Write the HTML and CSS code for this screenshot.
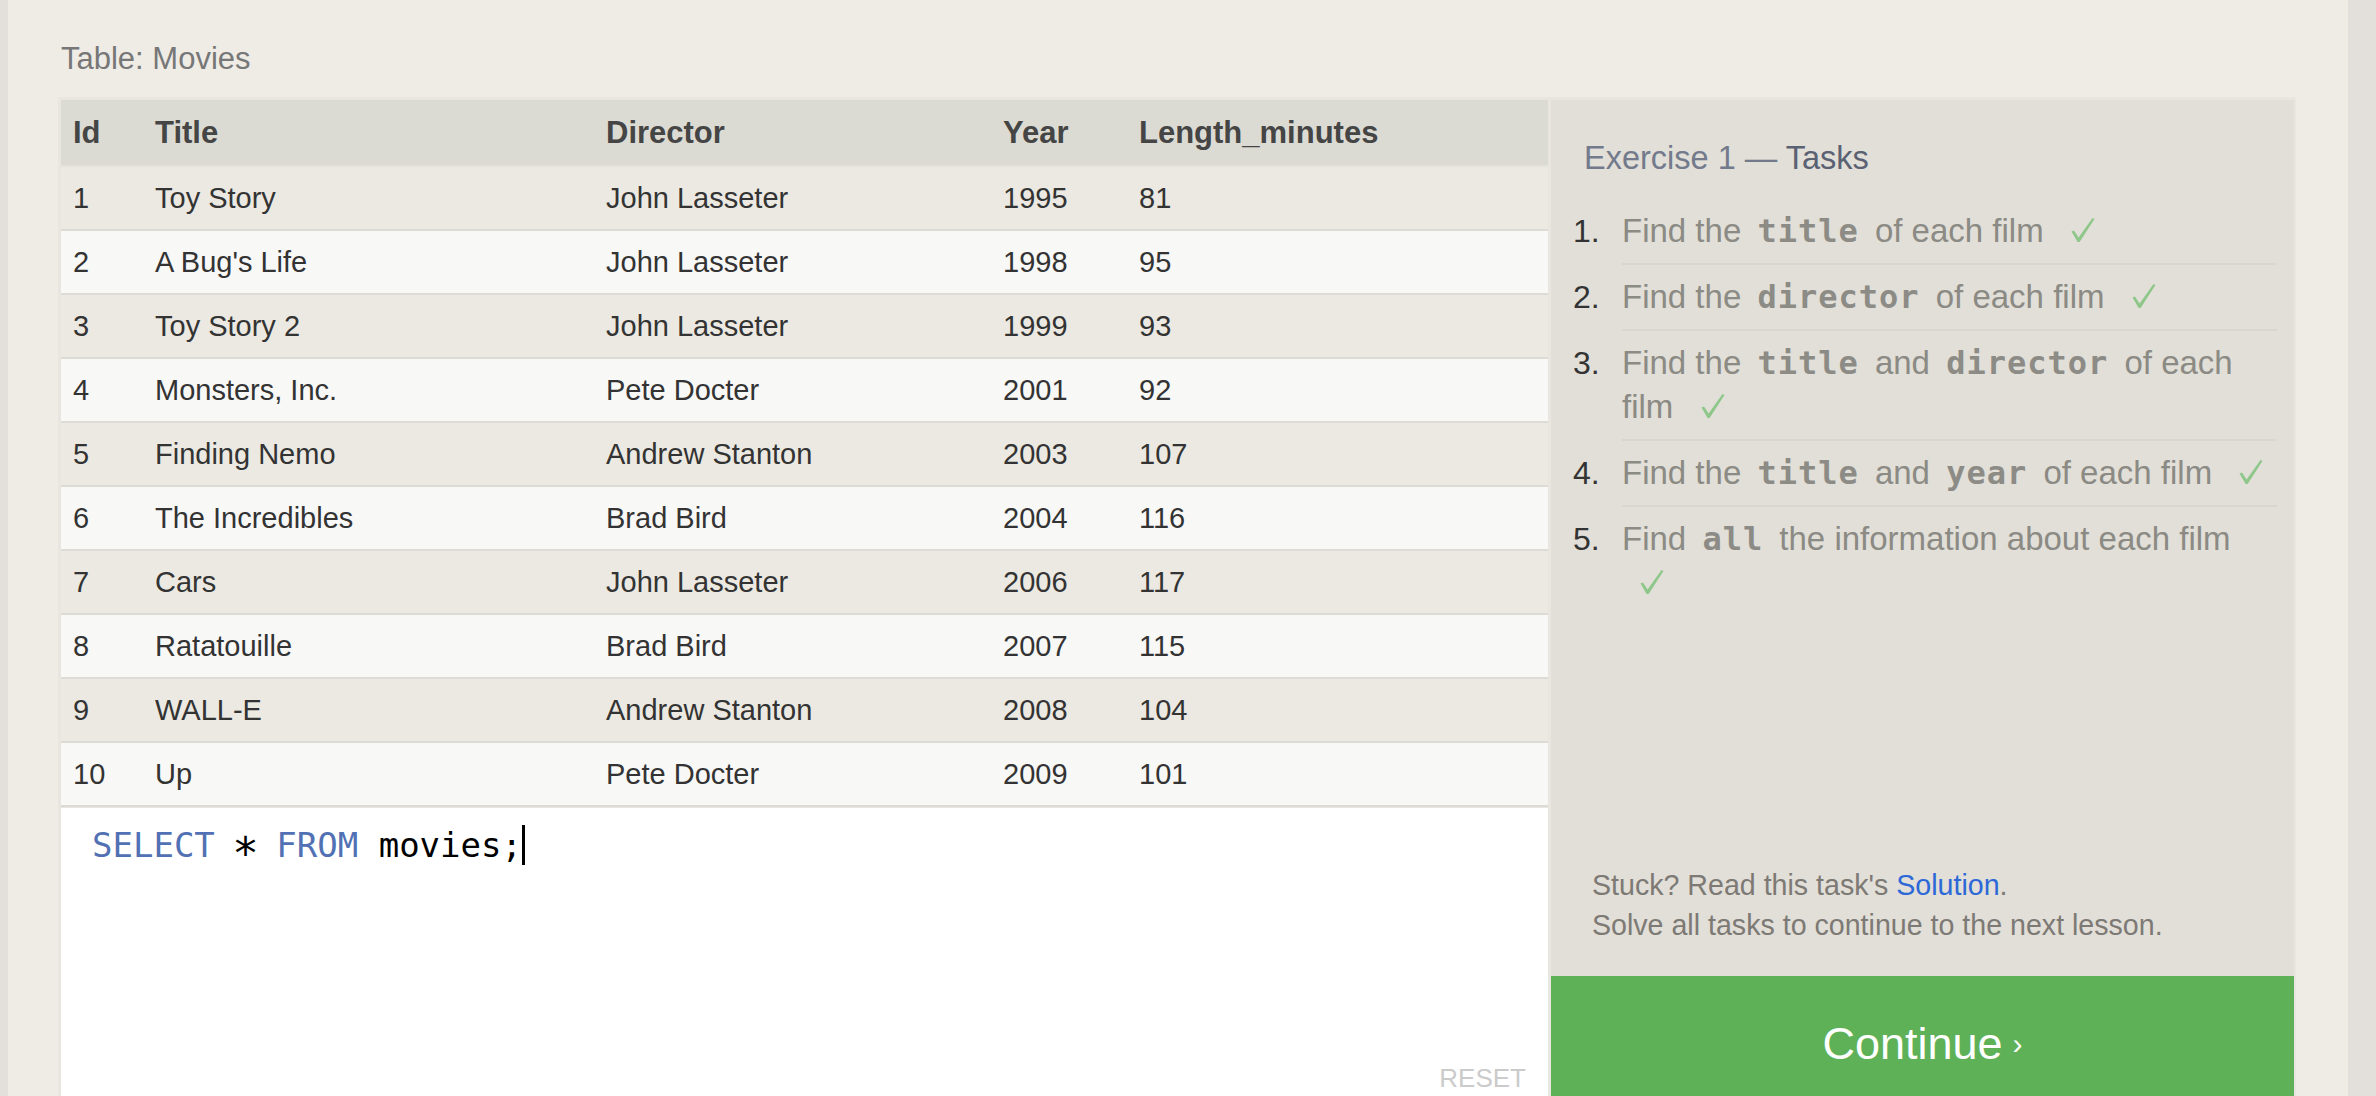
FILE: index.html
```html
<!DOCTYPE html>
<html lang="en">
<head>
<meta charset="utf-8">
<title>SQL Lesson 1 — Movies</title>
<link rel="stylesheet" href="styles.css">
</head>
<body>
<div class="page">
  <div class="caption">Table: Movies</div>
  <div class="exercise">
    <div class="left">
      <table class="movies">
        <colgroup>
          <col class="c-id"><col class="c-title"><col class="c-director"><col class="c-year"><col class="c-length">
        </colgroup>
        <thead>
          <tr><th>Id</th><th>Title</th><th>Director</th><th>Year</th><th>Length_minutes</th></tr>
        </thead>
        <tbody>
          <tr><td>1</td><td>Toy Story</td><td>John Lasseter</td><td>1995</td><td>81</td></tr>
          <tr><td>2</td><td>A Bug's Life</td><td>John Lasseter</td><td>1998</td><td>95</td></tr>
          <tr><td>3</td><td>Toy Story 2</td><td>John Lasseter</td><td>1999</td><td>93</td></tr>
          <tr><td>4</td><td>Monsters, Inc.</td><td>Pete Docter</td><td>2001</td><td>92</td></tr>
          <tr><td>5</td><td>Finding Nemo</td><td>Andrew Stanton</td><td>2003</td><td>107</td></tr>
          <tr><td>6</td><td>The Incredibles</td><td>Brad Bird</td><td>2004</td><td>116</td></tr>
          <tr><td>7</td><td>Cars</td><td>John Lasseter</td><td>2006</td><td>117</td></tr>
          <tr><td>8</td><td>Ratatouille</td><td>Brad Bird</td><td>2007</td><td>115</td></tr>
          <tr><td>9</td><td>WALL-E</td><td>Andrew Stanton</td><td>2008</td><td>104</td></tr>
          <tr><td>10</td><td>Up</td><td>Pete Docter</td><td>2009</td><td>101</td></tr>
        </tbody>
      </table>
      <div class="editor">
        <div class="code"><span class="kw">SELECT</span> <span class="star">*</span> <span class="kw">FROM</span> movies;<span class="cursor"></span></div>
        <div class="reset">RESET</div>
      </div>
    </div>
    <div class="panel">
      <div class="panel-body">
        <h2 class="panel-title">Exercise 1 — <span class="strong">Tasks</span></h2>
        <ol class="tasks">
          <li>Find the <code>title</code> of each film <svg class="check" viewBox="0 0 24 24" width="24" height="24"><path d="M0.5 13.5 L3 12.5 L7.6 19.5 L21.5 0 L23.5 1 L8.6 24 L6.6 24 Z"/></svg></li>
          <li>Find the <code>director</code> of each film <svg class="check" viewBox="0 0 24 24" width="24" height="24"><path d="M0.5 13.5 L3 12.5 L7.6 19.5 L21.5 0 L23.5 1 L8.6 24 L6.6 24 Z"/></svg></li>
          <li>Find the <code>title</code> and <code>director</code> of each <span class="word">film</span> <svg class="check" viewBox="0 0 24 24" width="24" height="24"><path d="M0.5 13.5 L3 12.5 L7.6 19.5 L21.5 0 L23.5 1 L8.6 24 L6.6 24 Z"/></svg></li>
          <li>Find the <code>title</code> and <code>year</code> of each film <svg class="check" viewBox="0 0 24 24" width="24" height="24"><path d="M0.5 13.5 L3 12.5 L7.6 19.5 L21.5 0 L23.5 1 L8.6 24 L6.6 24 Z"/></svg></li>
          <li class="last">Find <code>all</code> the information about each film <svg class="check" viewBox="0 0 24 24" width="24" height="24"><path d="M0.5 13.5 L3 12.5 L7.6 19.5 L21.5 0 L23.5 1 L8.6 24 L6.6 24 Z"/></svg></li>
        </ol>
        <div class="help">
          <p>Stuck? Read this task's <a href="#solution">Solution</a>.</p>
          <p>Solve all tasks to continue to the next lesson.</p>
        </div>
      </div>
      <div class="continue">Continue <span class="chev">›</span></div>
    </div>
  </div>
</div>
</body>
</html>
```

FILE: styles.css
```css
html, body {
  margin: 0;
  height: 100%;
  overflow: hidden;
}

body {
  background: #e3e0dc;
  font-family: "Liberation Sans", Arial, sans-serif;
}

.page {
  margin-left: 8px;
  width: 2340px;
  min-height: 100%;
  box-sizing: border-box;
  background: #efece6;
  padding: 41px 0 0 50px;
}

.caption {
  font-size: 31px;
  line-height: 36px;
  color: #777;
  margin: 0 0 20px 3px;
}

.exercise {
  display: flex;
  gap: 3px;
  width: fit-content;
  height: 1014px;
  box-sizing: border-box;
  padding: 3px 2px 0 3px;
  background: #e8e6df;
}

/* ---------- left: table + editor ---------- */
.left {
  width: 1487px;
  display: flex;
  flex-direction: column;
}

.movies {
  width: 100%;
  table-layout: fixed;
  border-collapse: collapse;
}

.c-id { width: 82px; }
.c-title { width: 451px; }
.c-director { width: 397px; }
.c-year { width: 136px; }

.movies th {
  background: #dcdbd3;
  color: #454545;
  font-size: 31px;
  font-weight: 700;
  text-align: left;
  line-height: 65px;
  padding: 0 0 0 12px;
  border-bottom: 2px solid #e4e2dc;
}

.movies td {
  color: #333;
  font-size: 29px;
  line-height: 62px;
  padding: 0 0 0 12px;
  border-bottom: 2px solid #dddbd6;
  white-space: nowrap;
}

.movies tbody tr:nth-child(odd) td { background: #ebe9e2; }
.movies tbody tr:nth-child(even) td { background: #f8f8f7; }

.editor {
  flex: 1;
  margin-top: 1px;
  background: #fff;
  display: flex;
  flex-direction: column;
  justify-content: space-between;
  padding: 17px 22px 18px 31px;
}

.code {
  font-family: "DejaVu Sans Mono", "Liberation Mono", monospace;
  font-size: 34px;
  line-height: 40px;
  color: #000;
}

.code .kw { color: #5271b4; }

.code .star {
  display: inline-flex;
  justify-content: center;
  width: 20.5px;
  font-size: 44px;
  line-height: 20px;
  vertical-align: -12px;
}

.cursor {
  display: inline-block;
  width: 3px;
  height: 40px;
  background: #000;
  vertical-align: -8px;
}

.reset {
  align-self: flex-end;
  font-size: 26px;
  line-height: 30px;
  color: #cbcbcb;
}

/* ---------- right: tasks panel ---------- */
.panel {
  width: 743px;
  background: #e1dfd7;
  display: flex;
  flex-direction: column;
}

.panel-body {
  flex: 1;
  display: flex;
  flex-direction: column;
  padding: 38px 17px 0 33px;
}

.panel-title {
  margin: 0;
  font-size: 32.5px;
  line-height: 40px;
  font-weight: 400;
  color: #737a8c;
}

.panel-title .strong { color: #5a6173; }

.tasks {
  margin: 21px 0 0;
  padding: 0 0 0 38px;
  font-size: 33px;
  line-height: 44px;
  color: #8b8a84;
}

.tasks li {
  padding: 10px 0;
  border-bottom: 2px solid #d8d6cd;
}

.tasks li.last { border-bottom: none; }

.tasks li::marker {
  content: counter(list-item) ".\2002\2009";
  color: #333;
  font-size: 32px;
}

.tasks code {
  font-family: "DejaVu Sans Mono", "Liberation Mono", monospace;
  font-weight: 700;
  font-size: 32px;
  letter-spacing: 1px;
  color: #8c8b86;
  margin: 0 7px;
}

.check {
  fill: #8fc78b;
  margin-left: 18px;
  vertical-align: baseline;
}

.help {
  margin: auto 0 31px 8px;
  font-size: 28.6px;
  line-height: 40px;
  color: #7d7975;
}

.help p { margin: 0; }

.help a {
  color: #2d68d8;
  text-decoration: none;
}

.continue {
  height: 135px;
  flex: none;
  background: #5fb158;
  color: #fff;
  font-size: 45px;
  display: flex;
  align-items: center;
  justify-content: center;
}

.chev {
  font-size: 30px;
  margin-left: 10px;
}
```
